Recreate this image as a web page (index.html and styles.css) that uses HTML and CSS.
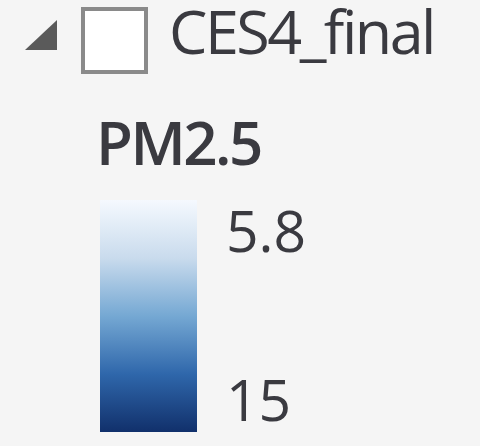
FILE: index.html
```html
<!DOCTYPE html>
<html lang="en">
<head>
    <meta charset="UTF-8">
    <title>CES4_final</title>
    <link rel="stylesheet" href="styles.css">
</head>
<body>
    <div class="layer">
        <svg class="expander" width="32" height="30" viewBox="0 0 32 30">
            <polygon points="32,0 32,30 0,30" fill="#5a5a5a"/>
        </svg>
        <span class="check"></span>
        <span class="layer_name">CES4_final</span>
    </div>

    <div class="legend">
        <div class="field">PM2.5</div>
        <div class="ramp">
            <div class="bar"></div>
            <div class="labels">
                <span>5.8</span>
                <span>15</span>
            </div>
        </div>
    </div>
</body>
</html>
```

FILE: styles.css
```css
*{
    margin: 0;
    padding: 0;
    box-sizing: border-box;
}

body{
    background-color: #f5f5f5;
    font-family: "Open Sans", "Noto Sans", sans-serif;
    color: #3a3a40;
    width: 480px;
    height: 446px;
    overflow: hidden;
}

.layer{
    display: flex;
    align-items: flex-start;
    padding-left: 25px;
    height: 81px;
}

.expander{
    margin-top: 20px;
    flex-shrink: 0;
}

.check{
    width: 67px;
    height: 67px;
    margin: 7px 0 0 24px;
    background-color: #fff;
    border: 4px solid #8a8a8a;
    flex-shrink: 0;
}

.layer_name{
    margin-left: 21px;
    font-size: 61px;
    line-height: 62px;
    letter-spacing: -2.5px;
}

.legend{
    padding-left: 96px;
}

.field{
    font-size: 60px;
    font-weight: 600;
    line-height: 70px;
    letter-spacing: -2.5px;
    margin-top: 26px;
}

.ramp{
    display: flex;
    margin-top: 23px;
    margin-left: 4px;
}

.bar{
    width: 97px;
    height: 232px;
    background: linear-gradient(#f5f9fe, #c9dbed 25%, #75a8d3 50%, #2f67ab 75%, #11306b);
}

.labels{
    display: flex;
    flex-direction: column;
    justify-content: space-between;
    padding: 2px 0 4px;
    margin-left: 29px;
    font-size: 57px;
    line-height: 57px;
}
```
